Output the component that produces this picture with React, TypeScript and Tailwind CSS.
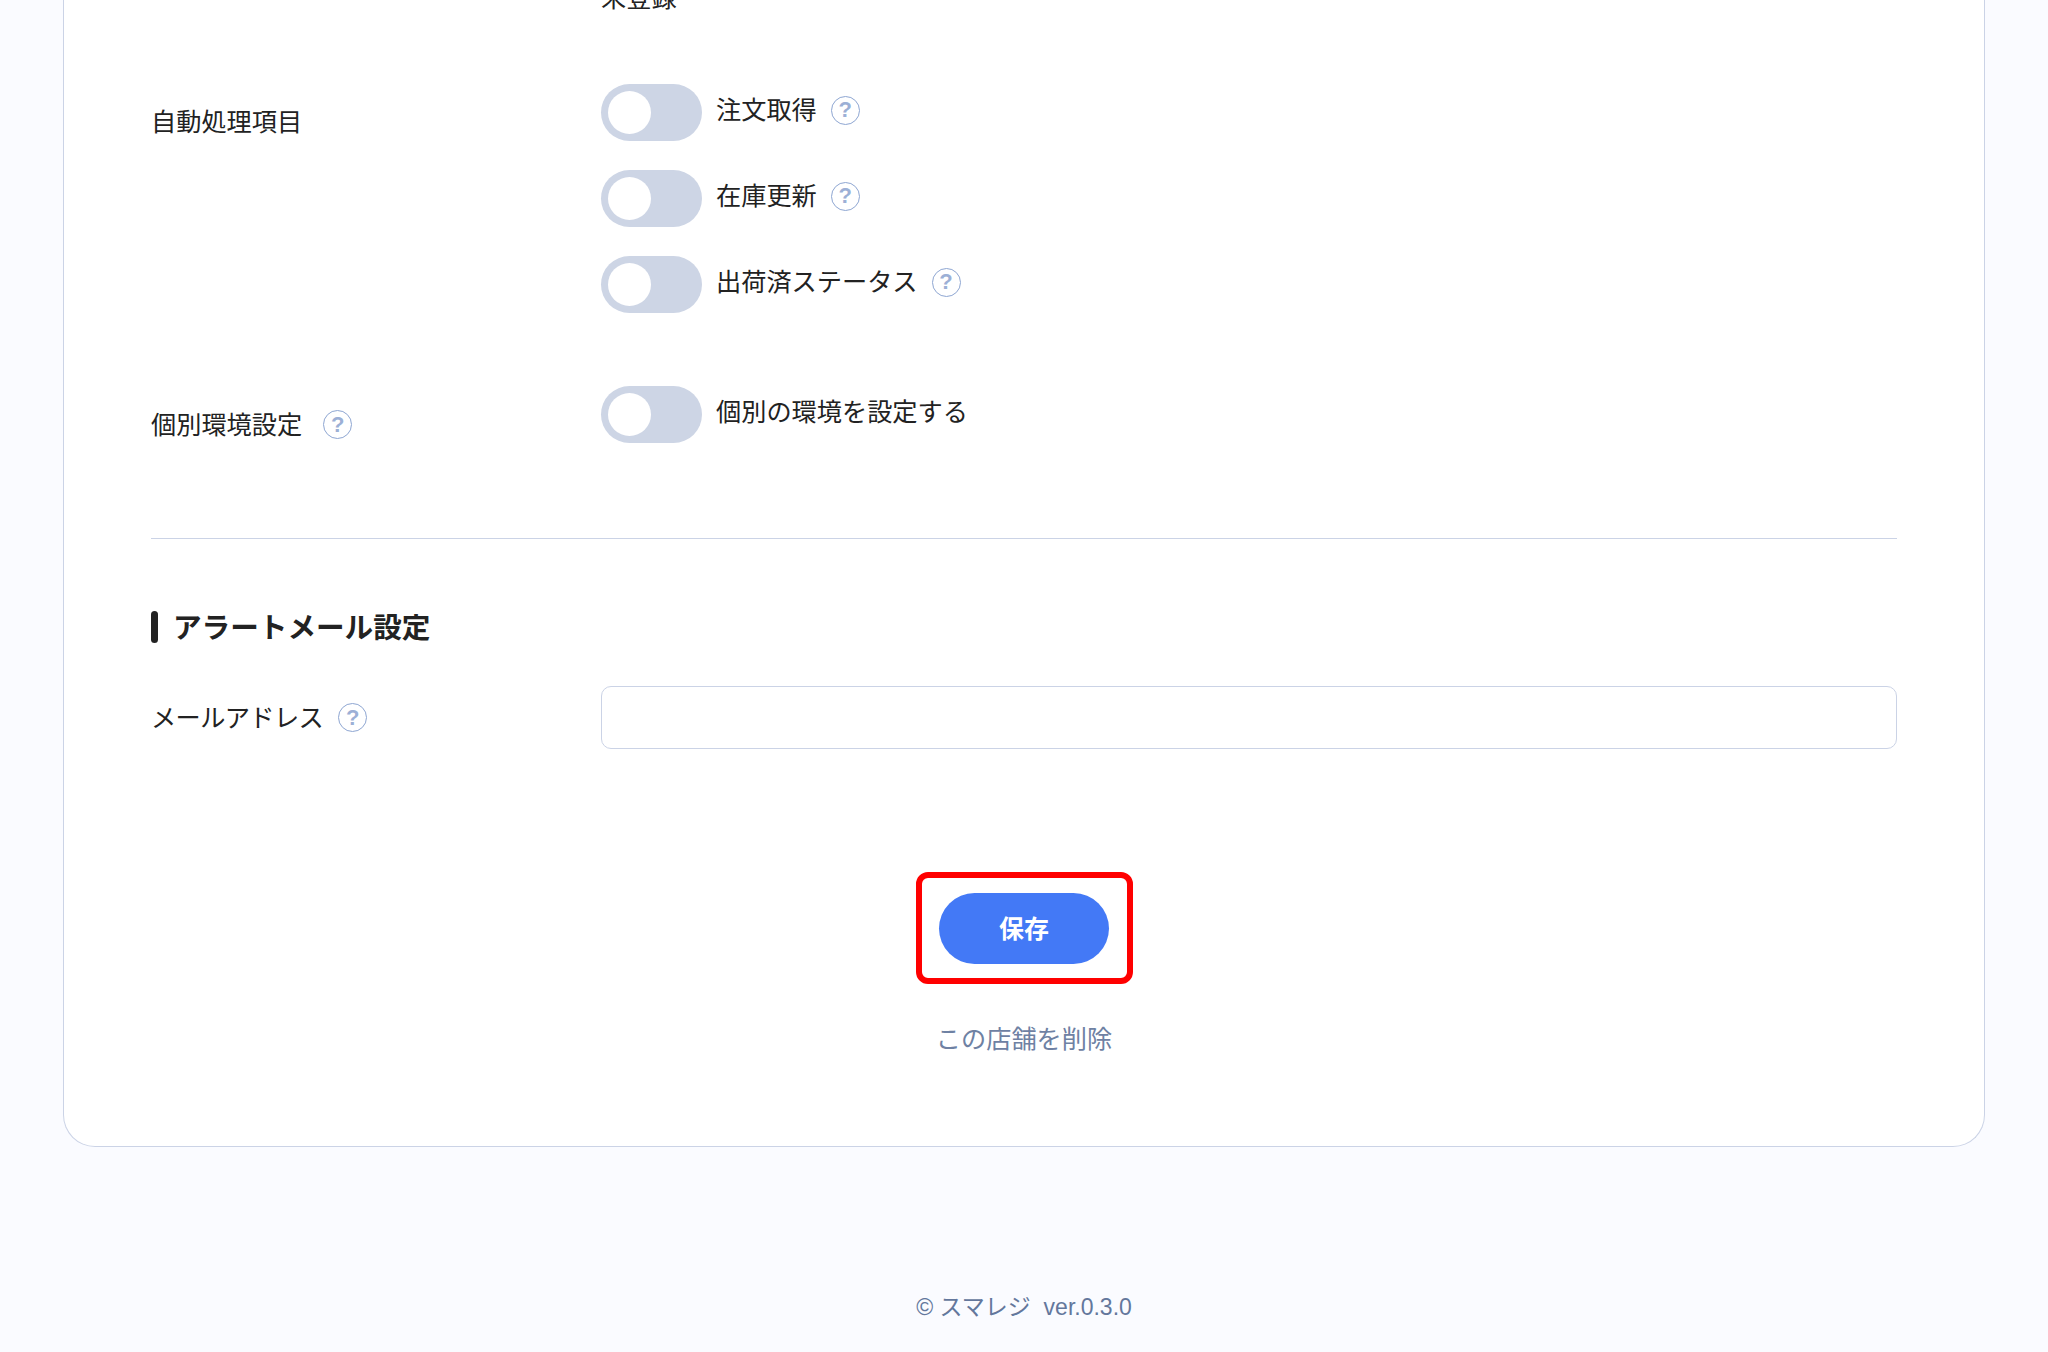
const font = { fontFamily: '"Liberation Sans", "Noto Sans CJK JP", sans-serif' };

function Help() {
  return (
    <span className="flex h-[29px] w-[29px] shrink-0 items-center justify-center rounded-full border border-[#8ea6d2] bg-white text-[22px] leading-none font-bold text-[#9cb0d6]">
      ?
    </span>
  );
}

function Toggle() {
  return (
    <span className="flex h-[57px] w-[101px] shrink-0 items-center rounded-full bg-[#cdd5e5] pl-[7px]">
      <span className="h-[43px] w-[43px] rounded-full bg-white" />
    </span>
  );
}

const autoItems = ["注文取得", "在庫更新", "出荷済ステータス"];

export default function App() {
  return (
    <div className="h-[1352px] overflow-hidden bg-[#fafbff] text-[25.2px] leading-[36px] text-[#222222]" style={font}>
      <div className="mx-[63px] -mt-[22px] h-[1169px] rounded-b-[32px] border-x border-b border-[#cbd3e6] bg-white px-[87px]">
        <div className="ml-[450px] h-[36px] pt-[2px]">未登録</div>

        <div className="mt-[70px] flex">
          <div className="mt-[20px] w-[450px]">自動処理項目</div>
          <div className="flex flex-col gap-[29px]">
            {autoItems.map((item) => (
              <div key={item} className="flex h-[57px] items-center">
                <Toggle />
                <span className="ml-[14px] -mt-[6px]">{item}</span>
                <span className="ml-[14px] -mt-[5px]">
                  <Help />
                </span>
              </div>
            ))}
          </div>
        </div>

        <div className="mt-[73px] flex">
          <div className="mt-[20px] flex w-[450px] items-center">
            個別環境設定
            <span className="ml-[21px]">
              <Help />
            </span>
          </div>
          <div className="flex h-[57px] items-center">
            <Toggle />
            <span className="ml-[14px] -mt-[6px]">個別の環境を設定する</span>
          </div>
        </div>

        <div className="mt-[95px] border-t border-[#cbd3e6]" />

        <h2 className="mt-[72px] flex h-[32px] items-center text-[28.6px] font-bold">
          <span className="h-[32px] w-[7px] rounded-full bg-[#222222]" />
          <span className="ml-[15px] mt-[2px]">アラートメール設定</span>
        </h2>

        <div className="mt-[43px] flex items-center">
          <div className="flex w-[450px] items-center">
            <span className="tracking-[-0.6px]">メールアドレス</span>
            <span className="ml-[15px]">
              <Help />
            </span>
          </div>
          <input className="h-[63px] flex-1 rounded-[10px] border border-[#cbd3e6] bg-white" />
        </div>

        <div className="mt-[123px] flex flex-col items-center">
          <div className="flex h-[112px] w-[217px] items-center justify-center rounded-[12px] border-[6px] border-[#ff0000]">
            <button className="h-[71px] w-[170px] rounded-full bg-[#4379f6] pt-[2px] text-[25px] font-bold text-white">
              保存
            </button>
          </div>
          <a className="mt-[37px] text-[#6e81a3]">この店舗を削除</a>
        </div>
      </div>

      <footer className="mt-[145px] text-center text-[23px] leading-[30px] text-[#63779c]">
        © スマレジ&nbsp;&nbsp;ver.0.3.0
      </footer>
    </div>
  );
}
